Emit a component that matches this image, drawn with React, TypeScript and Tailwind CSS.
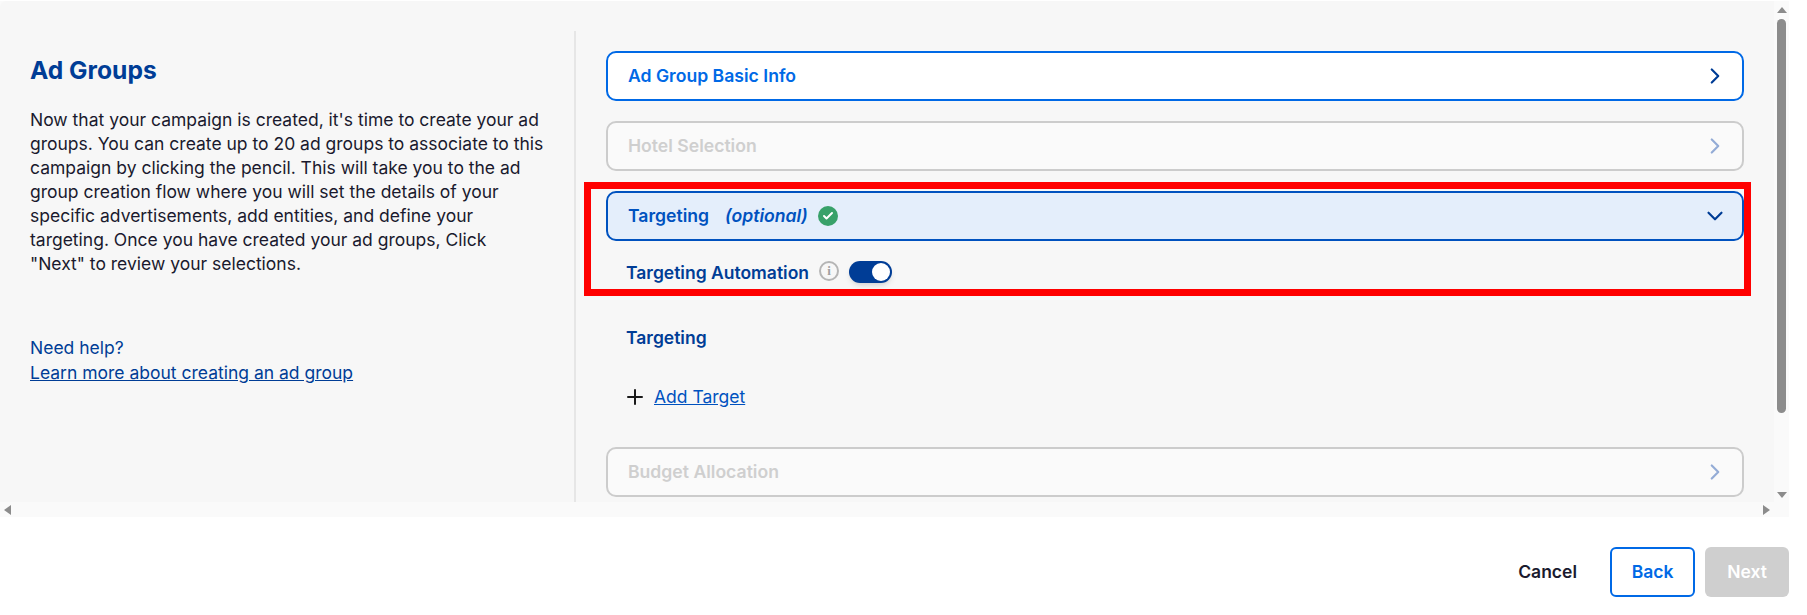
import { ChevronRight, ChevronDown, Plus, Check } from "lucide-react";

const Card = ({ title, disabled }: { title: string; disabled?: boolean }) => {
  return (
    <div
      className={`h-[50px] flex items-center justify-between pl-5 pr-[14px] rounded-[10px] border-2 ${
        disabled ? "bg-[#fafafa] border-[#cccccc]" : "bg-white border-[#0069e6]"
      }`}
    >
      <span className={`text-[17.6px] font-semibold ${disabled ? "text-[#cfcfcf]" : "text-[#0069e6]"}`}>{title}</span>
      <ChevronRight size={26} strokeWidth={2} className={disabled ? "text-[#94acd6]" : "text-[#003d96]"} />
    </div>
  );
};

export default function App() {
  return (
    <div className="relative w-full h-[615px] bg-white overflow-hidden pt-px font-['Inter',sans-serif]">
      <div className="w-[1789px] bg-[#fafafa]">
        <div className="flex h-[501px]">
          <div className="w-[1774px] flex bg-[#f7f7f7] rounded-tl-md overflow-hidden">
            <div className="w-[574px] shrink-0 pl-[30px] pr-[30px] pt-[50px]">
              <h1 className="text-[24.6px] leading-[38px] font-bold text-[#003d96]">Ad Groups</h1>
              <p className="mt-[19px] text-[17.5px] leading-6 text-[#1a1a2e]">
                Now that your campaign is created, it's time to create your ad groups. You can create up to 20 ad groups to associate to this campaign by clicking the pencil. This will take you to the ad group creation flow where you will set the details of your specific advertisements, add entities, and define your targeting. Once you have created your ad groups, Click "Next" to review your selections.
              </p>
              <p className="mt-[59px] text-[17.5px] leading-[25px] text-[#003d96]">Need help?</p>
              <a className="text-[17.5px] leading-[25px] text-[#003d96] underline">Learn more about creating an ad group</a>
            </div>
            <div className="mt-[30px] flex-1 border-l-2 border-[#e6e6e6] pl-[30px] pr-[30px] pt-5">
              <div className="flex flex-col gap-5">
                <Card title="Ad Group Basic Info" />
                <Card title="Hotel Selection" disabled />
                <div className="h-[50px] flex items-center justify-between pl-5 pr-[14px] rounded-[10px] border-2 bg-[#e4eefb] border-[#0052bf]">
                  <div className="flex items-center">
                    <span className="text-[17.6px] font-semibold text-[#0052bf]">Targeting</span>
                    <span className="ml-4 text-[17.6px] font-semibold italic text-[#0052bf]">(optional)</span>
                    <span className="ml-[10px] w-5 h-5 rounded-full bg-[#38a169] flex items-center justify-center">
                      <Check size={12} strokeWidth={4} className="text-white" />
                    </span>
                  </div>
                  <ChevronDown size={26} strokeWidth={2} className="text-[#003d96]" />
                </div>
              </div>
              <div className="pl-5">
                <div className="mt-5 h-[22px] flex items-center">
                  <span className="mt-[3px] text-[17.5px] font-semibold text-[#003d96]">Targeting Automation</span>
                  <span className="ml-[10px] -mt-[3px] w-5 h-5 rounded-full border-2 border-[#b5b5b5] flex items-center justify-center font-['Liberation_Serif',serif] text-[13px] leading-none font-bold text-[#a0a0a0]">i</span>
                  <span className="ml-[10px] w-[43px] h-[22px] rounded-full bg-[#003d96] flex items-center justify-end pr-[2px] shadow-md">
                    <span className="w-[18px] h-[18px] rounded-full bg-white" />
                  </span>
                </div>
                <div className="mt-[43px] text-[17.5px] font-semibold leading-6 text-[#003d96]">Targeting</div>
                <div className="mt-[35px] h-6 flex items-center gap-[7px]">
                  <Plus size={24} strokeWidth={2} className="-ml-[3px] text-[#1a1a1a]" />
                  <a className="text-[17.5px] text-[#0052bf] underline">Add Target</a>
                </div>
              </div>
              <div className="mt-[38px]">
                <Card title="Budget Allocation" disabled />
              </div>
            </div>
          </div>
          <div className="w-[15px] flex flex-col items-center pt-[6px] pb-1">
            <span className="w-0 h-0 border-x-[5px] border-x-transparent border-b-[6px] border-b-[#8c8c8c]" />
            <div className="w-[9px] h-[394px] mt-[6px] rounded-full bg-[#8c8c8c]" />
            <span className="mt-auto w-0 h-0 border-x-[5px] border-x-transparent border-t-[6px] border-t-[#8c8c8c]" />
          </div>
        </div>
        <div className="h-[15px] flex items-center justify-between pl-1 pr-[19px]">
          <span className="w-0 h-0 border-y-[5px] border-y-transparent border-r-[7px] border-r-[#8c8c8c]" />
          <span className="w-0 h-0 border-y-[5px] border-y-transparent border-l-[7px] border-l-[#8c8c8c]" />
        </div>
      </div>
      <div className="w-[1789px] mt-[30px] flex justify-end items-center gap-[10px]">
        <button className="mr-[23px] text-[17.5px] font-semibold text-[#1a1a2e]">Cancel</button>
        <button className="w-[85px] h-[50px] rounded-md border-2 border-[#0069e6] text-[17.5px] font-semibold text-[#0069e6]">Back</button>
        <button className="w-[84px] h-[50px] rounded-md bg-[#cfcfcf] text-[17.5px] font-semibold text-white">Next</button>
      </div>
      <div className="absolute left-[584px] top-[182px] w-[1167px] h-[114px] border-[7px] border-[#ff0000]" />
    </div>
  );
}
